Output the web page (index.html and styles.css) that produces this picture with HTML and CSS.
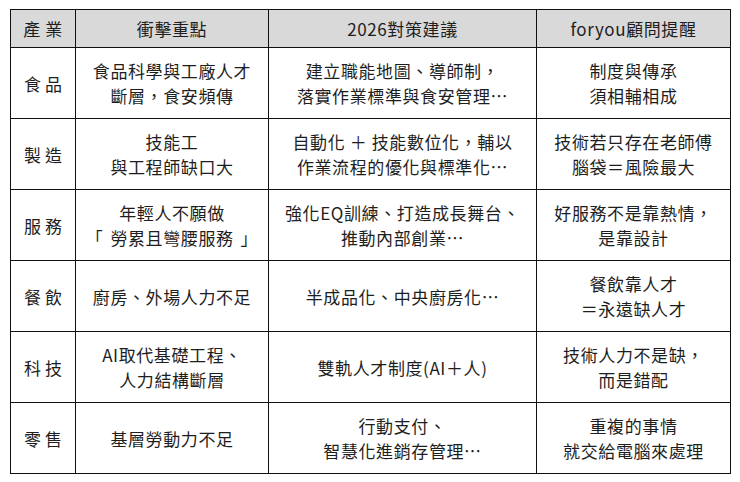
FILE: index.html
```html
<!DOCTYPE html>
<html lang="zh-Hant">
<head>
<meta charset="utf-8">
<link rel="stylesheet" href="styles.css">
</head>
<body>
<div class="page">
<table class="grid">
  <colgroup>
    <col class="c1"><col class="c2"><col class="c3"><col class="c4">
  </colgroup>
  <thead>
    <tr class="head">
      <th>產 業</th>
      <th>衝擊重點</th>
      <th>2026對策建議</th>
      <th>foryou顧問提醒</th>
    </tr>
  </thead>
  <tbody>
    <tr>
      <td class="ind">食 品</td>
      <td>食品科學與工廠人才<br>斷層，食安頻傳</td>
      <td>建立職能地圖、導師制，<br>落實作業標準與食安管理…</td>
      <td>制度與傳承<br>須相輔相成</td>
    </tr>
    <tr>
      <td class="ind">製 造</td>
      <td>技能工<br>與工程師缺口大</td>
      <td>自動化 ＋ 技能數位化，輔以<br>作業流程的優化與標準化…</td>
      <td>技術若只存在老師傅<br>腦袋＝風險最大</td>
    </tr>
    <tr>
      <td class="ind">服 務</td>
      <td>年輕人不願做<br>「<span class="gap"></span>勞累且彎腰服務<span class="gap"></span>」</td>
      <td>強化EQ訓練、打造成長舞台、<br>推動內部創業…</td>
      <td>好服務不是靠熱情，<br>是靠設計</td>
    </tr>
    <tr>
      <td class="ind">餐 飲</td>
      <td>廚房、外場人力不足</td>
      <td>半成品化、中央廚房化…</td>
      <td>餐飲靠人才<br>＝永遠缺人才</td>
    </tr>
    <tr>
      <td class="ind">科 技</td>
      <td>AI取代基礎工程、<br>人力結構斷層</td>
      <td>雙軌人才制度(AI＋人)</td>
      <td>技術人力不是缺，<br>而是錯配</td>
    </tr>
    <tr>
      <td class="ind">零 售</td>
      <td>基層勞動力不足</td>
      <td>行動支付、<br>智慧化進銷存管理…</td>
      <td>重複的事情<br>就交給電腦來處理</td>
    </tr>
  </tbody>
</table>
</div>
</body>
</html>
```
FILE: styles.css
```css
html, body {
  margin: 0;
  padding: 0;
  background: #ffffff;
}
.page {
  padding: 9px 0 0 10px;
}
.grid {
  border-collapse: collapse;
  table-layout: fixed;
  width: 720px;
  font-family: "Noto Sans CJK TC", "Noto Sans", sans-serif;
  font-size: 17px;
  color: #1e1e1e;
  letter-spacing: 0.6px;
}
.c1 { width: 65px; }
.c2 { width: 193px; }
.c3 { width: 268px; }
.c4 { width: 194px; }
.grid th, .grid td {
  border: 1px solid #111111;
  text-align: center;
  vertical-align: middle;
  padding: 0;
  line-height: 25px;
}
.grid th {
  font-weight: normal;
  background: #d9d9d9;
  height: 37px;
}
.grid td {
  height: 70px;
}
.grid td.ind {
  letter-spacing: 0;
}
.gap {
  display: inline-block;
  width: 7px;
}
```
